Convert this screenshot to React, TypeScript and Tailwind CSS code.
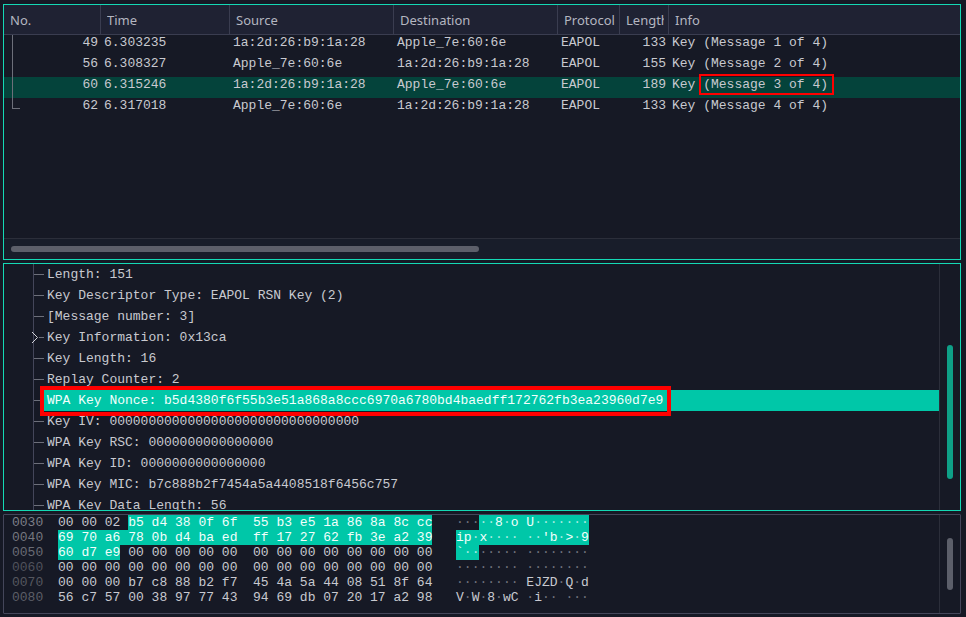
const packets = [
  { no: 49, time: "6.303235", src: "1a:2d:26:b9:1a:28", dst: "Apple_7e:60:6e", len: 133, msg: "(Message 1 of 4)" },
  { no: 56, time: "6.308327", src: "Apple_7e:60:6e", dst: "1a:2d:26:b9:1a:28", len: 155, msg: "(Message 2 of 4)" },
  { no: 60, time: "6.315246", src: "1a:2d:26:b9:1a:28", dst: "Apple_7e:60:6e", len: 189, msg: "(Message 3 of 4)" },
  { no: 62, time: "6.317018", src: "Apple_7e:60:6e", dst: "1a:2d:26:b9:1a:28", len: 133, msg: "(Message 4 of 4)" },
];

const columns = ["No.", "Time", "Source", "Destination", "Protocol", "Length", "Info"];

const details = [
  "Length: 151",
  "Key Descriptor Type: EAPOL RSN Key (2)",
  "[Message number: 3]",
  "Key Information: 0x13ca",
  "Key Length: 16",
  "Replay Counter: 2",
  "WPA Key Nonce: b5d4380f6f55b3e51a868a8ccc6970a6780bd4baedff172762fb3ea23960d7e9",
  "Key IV: 00000000000000000000000000000000",
  "WPA Key RSC: 0000000000000000",
  "WPA Key ID: 0000000000000000",
  "WPA Key MIC: b7c888b2f7454a5a4408518f6456c757",
  "WPA Key Data Length: 56",
];

const hexRows = [
  { addr: "0030", addrColor: "text-[#7d7f88]", pre: "00 00 02 ", sel: "b5 d4 38 0f 6f  55 b3 e5 1a 86 8a 8c cc", post: "", aPre: "···", aSel: "··8·o U·······", aPost: "" },
  { addr: "0040", addrColor: "text-[#75777f]", pre: "", sel: "69 70 a6 78 0b d4 ba ed  ff 17 27 62 fb 3e a2 39", post: "", aPre: "", aSel: "ip·x···· ··'b·>·9", aPost: "" },
  { addr: "0050", addrColor: "text-[#6a6c75]", pre: "", sel: "60 d7 e9", post: " 00 00 00 00 00  00 00 00 00 00 00 00 00", aPre: "", aSel: "`··", aPost: "····· ········" },
  { addr: "0060", addrColor: "text-[#50525c]", pre: "00 00 00 00 00 00 00 00  00 00 00 00 00 00 00 00", sel: "", post: "", aPre: "········ ········", aSel: "", aPost: "" },
  { addr: "0070", addrColor: "text-[#55575f]", pre: "00 00 00 b7 c8 88 b2 f7  45 4a 5a 44 08 51 8f 64", sel: "", post: "", aPre: "········ EJZD·Q·d", aSel: "", aPost: "" },
  { addr: "0080", addrColor: "text-[#5c5e67]", pre: "56 c7 57 00 38 97 77 43  94 69 db 07 20 17 a2 98", sel: "", post: "", aPre: "V·W·8·wC ·i·· ···", aSel: "", aPost: "" },
];

const gridCols = "grid grid-cols-[97px_129px_164px_164px_62px_49px_1fr]";

function Ascii({ text, selected = false }: { text: string; selected?: boolean }) {
  return (
    <>
      {text.split("").map((c, i) =>
        c === "·" ? (
          <span key={i} className={selected ? "text-[#a8ece0]" : "text-[#70727c]"}>
            {c}
          </span>
        ) : (
          <span key={i}>{c}</span>
        )
      )}
    </>
  );
}

function PacketList() {
  return (
    <div className="relative flex h-[256px] flex-col border border-[#14d9b5] bg-[#161925]">
      <div className={`${gridCols} h-[30px] shrink-0 border-b border-[#3a3d50] bg-[#1f2233] pt-[2px] font-['Noto_Sans',sans-serif] text-[13px] text-[#b4b6c0]`}>
        {columns.map((c, i) => (
          <div key={c} className={`-mt-[2px] flex items-center pt-[2px] ${i < 6 ? "border-r border-[#3a3d50]" : ""}`}>
            <div className="ml-[6px] mr-[4px] overflow-hidden whitespace-nowrap">{c}</div>
          </div>
        ))}
      </div>

      <div className="relative flex-1 font-['Liberation_Mono',monospace] text-[13px] leading-[15px] text-[#c8c9d0]">
        {packets.map((p) => (
          <div
            key={p.no}
            className={`${gridCols} h-[21px] items-start whitespace-pre ${p.no === 60 ? "bg-[#04433b]" : ""}`}
          >
            <div className="pr-[3px] text-right">{p.no}</div>
            <div className="pl-[3px]">{p.time}</div>
            <div className="pl-[3px]">{p.src}</div>
            <div className="pl-[3px]">{p.dst}</div>
            <div className="pl-[3px]">EAPOL</div>
            <div className="pr-[3px] text-right">{p.len}</div>
            <div className="pl-[3px]">
              Key{" "}
              <span className="relative">
                {p.msg}
                {p.no === 60 && (
                  <span className="absolute -left-[4px] -top-[3px] h-[21px] w-[135px] border-2 border-[#ff0000]" />
                )}
              </span>
            </div>
          </div>
        ))}
        {/* conversation bracket */}
        <div className="absolute left-[8px] top-0 h-[74px] w-[8px] border-b border-l border-[#6d6f7a]" />
      </div>

      <div className="flex h-[21px] shrink-0 items-center border-t border-[#2b2e3a] bg-[#181d2a] pl-[7px]">
        <div className="h-[6px] w-[468px] rounded-full bg-[#5c5f6a]" />
      </div>
    </div>
  );
}

function PacketDetails() {
  return (
    <div className="mt-[3px] flex h-[248px] overflow-hidden border border-[#14d9b5] bg-[#161925]">
      <div className="relative flex-1 overflow-hidden font-['Liberation_Mono',monospace] text-[13px] text-[#c8c9d0]">
        {details.map((d) => {
          const selected = d.startsWith("WPA Key Nonce");
          const expandable = d.startsWith("Key Information");
          return (
            <div key={d} className="flex h-[21px] shrink-0 items-center pl-[30px] whitespace-pre">
              <div className={`h-px bg-[#6d6f7a] ${expandable ? "ml-[5px] w-[5px]" : "w-[10px]"}`} />
              <div className={`flex h-full flex-1 items-center pl-[3px] ${selected ? "bg-[#00c7a8] text-[#f2fffc]" : ""}`}>
                <span className="relative">
                  {d}
                  {selected && (
                    <span className="absolute -left-[7px] -top-[5px] h-[30px] w-[631px] border-4 border-[#ff0000]" />
                  )}
                </span>
              </div>
            </div>
          );
        })}
        {/* tree guide and the collapsed arrow */}
        <div className="absolute bottom-0 left-[29px] top-0 w-px bg-[#44465a]" />
        <svg className="absolute left-[27px] top-[67px]" width="8" height="13" viewBox="0 0 8 13" fill="none">
          <path d="M1 1 L6.5 6.5 L1 12" stroke="#d4d5da" strokeWidth="1" />
        </svg>
      </div>
      <div className="flex w-[21px] shrink-0 flex-col border-l border-[#2b2e3a] pl-[7px] pt-[81px]">
        <div className="h-[134px] w-[6px] rounded-full bg-[#0ea088]" />
      </div>
    </div>
  );
}

function PacketBytes() {
  return (
    <div className="mt-[3px] flex h-[100px] overflow-hidden rounded-[1px] border border-[#44465a] bg-[#161925]">
      <div className="flex-1 font-['Liberation_Mono',monospace] text-[13px] leading-[15px] text-[#c8c9d0]">
        {hexRows.map((r) => (
          <div key={r.addr} className="flex h-[15px] whitespace-pre">
            <div className={`w-[54px] pl-[8px] ${r.addrColor}`}>{r.addr}</div>
            <div className="w-[398px]">
              {r.pre}
              {r.sel && <span className="inline-block h-[15px] bg-[#00c7a8] text-[#f2fffc]">{r.sel}</span>}
              {r.post}
            </div>
            <div>
              <Ascii text={r.aPre} />
              {r.aSel && (
                <span className="inline-block h-[15px] bg-[#00c7a8] text-[#f2fffc]">
                  <Ascii text={r.aSel} selected />
                </span>
              )}
              <Ascii text={r.aPost} />
            </div>
          </div>
        ))}
      </div>
      <div className="flex w-[21px] shrink-0 flex-col border-l border-[#2b2e3a] pl-[7px] pt-[23px]">
        <div className="h-[52px] w-[6px] rounded-full bg-[#5c5f6a]" />
      </div>
    </div>
  );
}

export default function App() {
  return (
    <div className="h-[617px] w-[966px] overflow-hidden bg-[#161925] pl-[3px] pr-[5px] pt-[4px]">
      <PacketList />
      <PacketDetails />
      <PacketBytes />
    </div>
  );
}
